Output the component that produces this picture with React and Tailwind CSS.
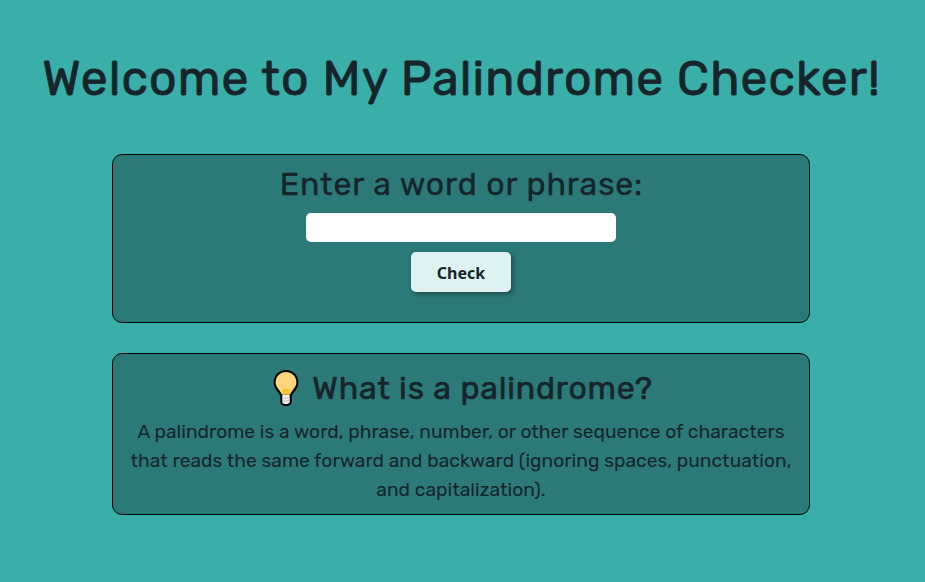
function Bulb() {
  return (
    <svg className="mt-[-1px] h-9 w-[26px] shrink-0" viewBox="0 0 26 36" aria-hidden="true">
      <path d="M13 0C6.200 0 .6 5.400.6 12.200c0 4 1.700 6.600 3.800 9.200 1.700 2.100 2.900 3.500 2.900 5.600v4.700c0 2.400 2.200 4.300 5.700 4.300s5.700-1.900 5.700-4.300V27c0-2.100 1.200-3.500 2.900-5.600 2.100-2.600 3.800-5.200 3.800-9.200C25.400 5.400 19.800 0 13 0Z" fill="#000" />
      <path d="M13 2C7.200 2 2.600 6.600 2.600 12.200c0 5.500 4.600 7.500 6.200 12.300h8.400c1.600-4.800 6.200-6.800 6.200-12.300C23.400 6.600 18.800 2 13 2Z" fill="#ffd67d" />
      <path d="M11.200 25v-4.800H9.400m5.400 4.800v-4.800h1.800M11 20.200h4" stroke="#fdbf10" strokeWidth="2.100" fill="none" />
      <path d="M9.300 25h7.400v7.200c0 1.200-2 1.800-3.700 1.800s-3.700-.6-3.700-1.800Z" fill="#f0f0f0" />
      <path d="m9.300 28.300 7.400-.8m-7.400 3.800 7.400-.8" stroke="#aaa" strokeWidth=".7" />
    </svg>
  );
}

export default function App() {
  return (
    <main className="flex min-h-screen flex-col items-center bg-[#3aafa9] pr-[3px] pt-[50px] text-center font-['Rubik','Roboto',sans-serif] text-[#17252a]">
      <h1 className="whitespace-nowrap pl-px text-[48px] font-normal leading-[57px] tracking-[1.08px] [-webkit-text-stroke:0.8px_#17252a]">
        Welcome to My Palindrome Checker!
      </h1>
      <section className="mt-[47px] flex h-[169px] w-[698px] flex-col items-center rounded-[10px] border border-black bg-[#2b7a78] pt-[10px]">
        <label htmlFor="text-input" className="pl-px text-[32px] font-normal leading-[38px] tracking-[0.86px] [-webkit-text-stroke:0.35px_#17252a]">
          Enter a word or phrase:
        </label>
        <input id="text-input" className="mt-[10px] h-[29px] w-[310px] rounded-[5px] bg-white px-2 outline-none" />
        <button className="mt-[10px] h-10 w-[100px] rounded-[5px] bg-[#def2f1] pt-[2px] font-['Noto_Sans',sans-serif] text-base font-bold shadow-[2px_2px_5px_rgba(0,0,0,0.4)]">
          Check
        </button>
      </section>
      <section className="mt-[30px] flex h-[162px] w-[698px] flex-col items-center rounded-[10px] border border-black bg-[#2b7a78] pt-[15px]">
        <h2 className="flex items-center gap-[13px] pl-[4px] text-[32px] font-normal leading-[38px] tracking-[0.78px] [-webkit-text-stroke:0.6px_#17252a]">
          <Bulb />
          <span>What is a palindrome?</span>
        </h2>
        <p className="mt-[10px] whitespace-nowrap text-[19.2px] leading-[29px] tracking-[0.03px]">
          A palindrome is a word, phrase, number, or other sequence of characters
          <br />
          that reads the same forward and backward (ignoring spaces, punctuation,
          <br />
          and capitalization).
        </p>
      </section>
    </main>
  );
}
